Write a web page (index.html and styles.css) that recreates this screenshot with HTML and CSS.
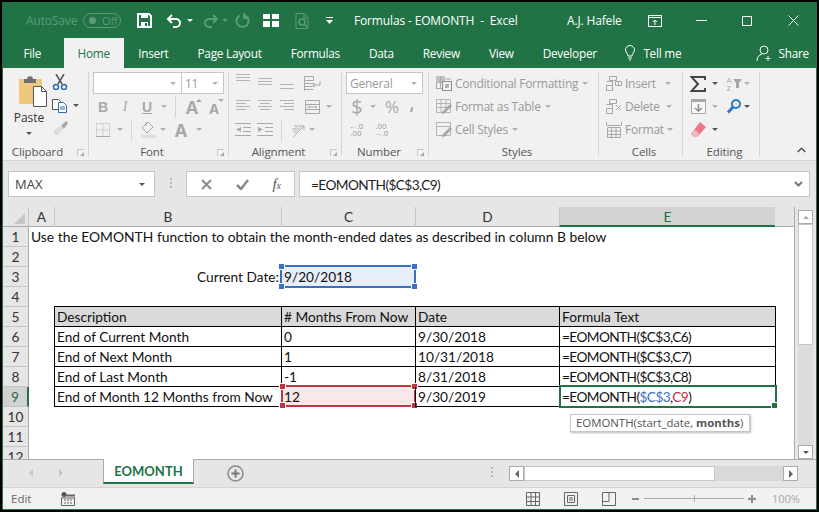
FILE: index.html
```html
<!DOCTYPE html>
<html lang="en">
  <head>
    <meta charset="UTF-8" />
    <title>Formulas - EOMONTH - Excel</title>
    <link rel="stylesheet" href="styles.css">
  </head>
  <body>
    <div class="window">
      <!-- title bar -->
      <div class="titlebar">
        <span class="autosave">AutoSave</span>
        <span class="toggle"><i></i>Off</span>
        <svg class="qa-save" width="15" height="15" viewBox="0 0 15 15"><path d="M1 1h11l2 2v11H1z" fill="none" stroke="#fff" stroke-width="2"/><rect x="4" y="1" width="7" height="4" fill="#fff"/><rect x="4" y="9" width="7" height="5" fill="#fff"/><rect x="8" y="10" width="2" height="3" fill="#217346"/></svg>
        <svg class="qa-undo" width="16" height="14" viewBox="0 0 16 14"><path d="M6 1L2 5l4 4M2 5h8a4 4 0 0 1 0 8H7" fill="none" stroke="#fff" stroke-width="2"/></svg>
        <span class="caret white qa-c1"></span>
        <svg class="qa-redo" width="16" height="14" viewBox="0 0 16 14"><path d="M10 1l4 4-4 4M14 5H6a4 4 0 0 0 0 8h3" fill="none" stroke="#5c9a78" stroke-width="2"/></svg>
        <span class="caret faint qa-c2"></span>
        <svg class="qa-repeat" width="15" height="15" viewBox="0 0 15 15"><path d="M5 2.5a6 6 0 1 0 5 0M9 0v5h5" fill="none" stroke="#5c9a78" stroke-width="2"/></svg>
        <svg class="qa-grid" width="16" height="13" viewBox="0 0 16 13"><path d="M0 0h7v5H0zM9 0h7v5H9zM0 7h7v6H0zM9 7h7v6H9z" fill="#fff"/></svg>
        <svg class="qa-preview" width="14" height="16" viewBox="0 0 14 16"><path d="M9 .5H1v15h12V5zM9 .5V5h4" fill="none" stroke="#5c9a78"/><circle cx="7" cy="9" r="3" fill="none" stroke="#5c9a78" stroke-width="1.5"/><path d="M9 11l3 3" stroke="#5c9a78" stroke-width="1.5"/></svg>
        <svg class="qa-custom" width="7" height="7" viewBox="0 0 7 7"><path d="M0 0h7v1H0zM0 3h7L3.5 7z" fill="#fff"/></svg>
        <span class="doc-title">Formulas - EOMONTH &nbsp;-&nbsp; Excel</span>
        <span class="user">A.J. Hafele</span>
        <svg class="win-display" width="14" height="12" viewBox="0 0 14 12"><path d="M.5 2.500h13v9H.5zM.5.5h13v2H.5zM7 10V5M5 7l2-2 2 2" fill="none" stroke="#fff"/></svg>
        <svg class="win-min" width="11" height="1" viewBox="0 0 11 1"><rect width="11" height="1" fill="#fff"/></svg>
        <svg class="win-max" width="10" height="10" viewBox="0 0 10 10"><rect x=".5" y=".5" width="9" height="9" fill="none" stroke="#fff"/></svg>
        <svg class="win-close" width="11" height="11" viewBox="0 0 11 11"><path d="M.5.5l10 10M10.500.5l-10 10" stroke="#fff"/></svg>
      </div>

      <!-- ribbon tabs -->
      <div class="tabs">
        <span class="tab file">File</span>
        <span class="tab active">Home</span>
        <span class="tab">Insert</span>
        <span class="tab">Page Layout</span>
        <span class="tab">Formulas</span>
        <span class="tab">Data</span>
        <span class="tab">Review</span>
        <span class="tab">View</span>
        <span class="tab">Developer</span>
        <span class="tell">
          <svg width="10" height="16" viewBox="0 0 10 16"><path d="M3 11C3 8 .5 8 .5 5a4.500 4.500 0 0 1 9 0c0 3-2.500 3-2.500 6zM3 13h4M4 15h2" fill="none" stroke="#fff"/></svg>
          Tell me
        </span>
        <span class="share">
          <svg width="16" height="17" viewBox="0 0 16 17"><circle cx="8" cy="5" r="4" fill="none" stroke="#fff"/><path d="M1 16c0-4 2-6 5-7M12 11v5M9.500 13.500h5" fill="none" stroke="#fff"/></svg>
          Share
        </span>
      </div>

      <!-- ribbon -->
      <div class="ribbon">
        <div class="group g-clip">
          <div class="body clip-body">
            <div class="paste">
              <svg width="30" height="36" viewBox="0 0 30 36"><path d="M1 5h22a1 1 0 0 1 1 1v24H2a1 1 0 0 1-1-1z" fill="#edc87e"/><path d="M6 5h3l1-2.500h4L15 5h3v4H6z" fill="#6f6f6f"/><path d="M15.500 12.500h8l5 5v15h-13z" fill="#fff" stroke="#555"/><path d="M23.500 12.500v5h5" fill="none" stroke="#555"/></svg>
              <span class="paste-label">Paste</span>
              <span class="caret dark"></span>
            </div>
            <div class="clip-tools">
              <svg width="16" height="16" viewBox="0 0 16 16"><path d="M4 0l6 10M12 0L6 10" stroke="#555" stroke-width="1.500"/><circle cx="4" cy="13" r="2.500" fill="none" stroke="#2b6cb0" stroke-width="1.500"/><circle cx="12" cy="13" r="2.500" fill="none" stroke="#2b6cb0" stroke-width="1.500"/></svg>
              <div class="irow copy-row">
                <svg width="15" height="14" viewBox="0 0 15 14"><path d="M.5.5h6l2 2v8H.5z" fill="#fff" stroke="#555"/><path d="M6.500 3.500h5l3 3v7h-8z" fill="#fff" stroke="#2b6cb0"/><path d="M8 8h5M8 10h5" stroke="#2b6cb0"/></svg>
                <span class="caret dark"></span>
              </div>
              <svg class="painter" width="17" height="16" viewBox="0 0 17 16"><path d="M1 12l6-6 4 3-5 6H3z" fill="#ddd"/><path d="M9 6l5-5 2 2-4 6z" fill="#a8a8a8"/></svg>
            </div>
          </div>
          <div class="label">Clipboard</div>
          <span class="launcher"></span>
        </div>

        <div class="group g-font">
          <div class="body">
            <div class="irow box-row">
              <span class="box font-name"><span class="caret"></span></span>
              <span class="box font-size"><em>11</em><span class="caret"></span></span>
            </div>
            <div class="irow">
              <span class="ti w22 fnt-b">B</span>
              <span class="ti w22 fnt-i">I</span>
              <span class="ti w22 fnt-u">U</span>
              <span class="ti w12"><span class="caret"></span></span>
              <span class="ti w11"><span class="vsep"></span></span>
              <span class="ti w22 fnt-a">A<span class="caret up"></span></span>
              <span class="ti w22 fnt-a small">A<span class="caret"></span></span>
            </div>
            <div class="irow">
              <span class="ti w22"><svg width="14" height="14" viewBox="0 0 14 14"><path d="M.5.5h13v13H.5zM7 .5v13M.5 7h13" fill="none" stroke="#b4b4b4" stroke-dasharray="1 1"/><path d="M0 13.500h14" stroke="#a8a8a8"/></svg></span>
              <span class="ti w12"><span class="caret"></span></span>
              <span class="ti w11"><span class="vsep"></span></span>
              <span class="ti w22"><svg width="15" height="17" viewBox="0 0 15 17"><path d="M7 1L1 7l5 5 6-6zM5 1v4" fill="none" stroke="#a8a8a8"/><rect y="14" width="15" height="3" fill="#e2dcdc"/></svg></span>
              <span class="ti w8"><span class="caret"></span></span>
              <span class="ti w28 fnt-a">A</span>
              <span class="ti w8"><span class="caret"></span></span>
            </div>
          </div>
          <div class="label">Font</div>
          <span class="launcher"></span>
        </div>

        <div class="group g-align">
          <div class="body">
            <div class="irow">
              <span class="ti w22 lines at-top"><i></i><i></i><i></i></span>
              <span class="ti w22 lines at-mid"><i></i><i></i><i></i></span>
              <span class="ti w22 lines at-bot"><i></i><i></i></span>
              <span class="ti w28"><svg width="17" height="16" viewBox="0 0 17 16"><path d="M.5.5h9v4h-9zM.5 7.500h9M.5 10.500h9M.5 13.500h9M.5 4.500v10" fill="none" stroke="#a8a8a8"/><path d="M9 9h7V5M9 9l2-2M9 9l2 2" fill="none" stroke="#a8a8a8"/></svg></span>
            </div>
            <div class="irow">
              <span class="ti w22 lines left"><i></i><i></i><i></i><i></i></span>
              <span class="ti w22 lines center"><i></i><i></i><i></i><i></i></span>
              <span class="ti w22 lines right"><i></i><i></i><i></i><i></i></span>
              <span class="ti w28"><svg width="15" height="14" viewBox="0 0 15 14"><path d="M.5.5h14v13H.5zM.5 4.500h14M.5 9.500h14M3 7h9M3 7l1.500-1M3 7l1.500 1M12 7l-1.500-1M12 7l-1.500 1" fill="none" stroke="#a8a8a8"/></svg></span>
              <span class="ti w6"><span class="caret"></span></span>
            </div>
            <div class="irow">
              <span class="ti w22"><svg width="16" height="13" viewBox="0 0 16 13"><path d="M0 .5h16M8 4.500h8M8 8.500h8M0 12.500h16" stroke="#a8a8a8"/><path d="M6 4v5L1 6.500z" fill="#a8a8a8"/></svg></span>
              <span class="ti w22"><svg width="16" height="13" viewBox="0 0 16 13"><path d="M0 .5h16M8 4.500h8M8 8.500h8M0 12.500h16" stroke="#a8a8a8"/><path d="M1 4v5l5-2.500z" fill="#a8a8a8"/></svg></span>
              <span class="ti w10"><span class="vsep"></span></span>
              <span class="ti w22"><span class="orient">ab</span><svg class="orient-arrow" width="16" height="16" viewBox="0 0 16 16"><path d="M4 15L15 4M15 4h-4M15 4v4" fill="none" stroke="#a8a8a8"/></svg></span>
              <span class="ti w8"><span class="caret"></span></span>
            </div>
          </div>
          <div class="label">Alignment</div>
          <span class="launcher"></span>
        </div>

        <div class="group g-num">
          <div class="body">
            <div class="irow box-row">
              <span class="box num-format"><em>General</em><span class="caret"></span></span>
            </div>
            <div class="irow">
              <span class="ti w22 num-sym big">$</span>
              <span class="ti w10"><span class="caret"></span></span>
              <span class="ti w28 num-sym">%</span>
              <span class="ti w12 num-sym comma">,</span>
            </div>
            <div class="irow">
              <span class="ti w20 dec">←.0
.00</span>
              <span class="ti w30 dec">.00
→.0</span>
            </div>
          </div>
          <div class="label">Number</div>
          <span class="launcher"></span>
        </div>

        <div class="group g-styles">
          <div class="body">
            <div class="irow cmd">
              <svg width="16" height="15" viewBox="0 0 16 15"><path d="M0 0h9v6H0z" fill="#c2c2c2"/><path d="M.5 6.500h8v6h-8zM4.500 0v12M9 3h6" fill="none" stroke="#a8a8a8"/><rect x="6.500" y="5.500" width="9" height="9" fill="#f1f1f1" stroke="#8e8e8e"/><path d="M9 9h4M9 11h4M12.500 8l-3 4" stroke="#8e8e8e"/></svg>
              <span>Conditional Formatting</span><span class="caret"></span>
            </div>
            <div class="irow cmd">
              <svg width="16" height="15" viewBox="0 0 16 15"><path d="M.5.500h14v13H.5zM.5 4.500h14M.5 8.500h14M5 .5v13M10 .5v13" fill="none" stroke="#b4b4b4"/><path d="M5 14l9-9 2 2-8 8z" fill="#a8a8a8"/></svg>
              <span>Format as Table</span><span class="caret"></span>
            </div>
            <div class="irow cmd">
              <svg width="16" height="15" viewBox="0 0 16 15"><path d="M.5.500h14v13H.5zM.5 4.500h14" fill="none" stroke="#b4b4b4"/><path d="M5 14l9-9 2 2-8 8z" fill="#a8a8a8"/></svg>
              <span>Cell Styles</span><span class="caret"></span>
            </div>
          </div>
          <div class="label">Styles</div>
        </div>

        <div class="group g-cells">
          <div class="body">
            <div class="irow cmd">
              <svg width="16" height="15" viewBox="0 0 16 15"><path d="M3.500.5h7v4h-7zM.5 9.500h6v5h-6zM.5 5.500h6M9.500 5.500h6v4h-6zM12.500 5.500v4M6.500 5v10" fill="none" stroke="#a8a8a8"/></svg>
              <span>Insert</span><span class="caret c-insert"></span>
            </div>
            <div class="irow cmd">
              <svg width="16" height="15" viewBox="0 0 16 15"><path d="M3.500.5h7v4h-7zM.5 9.500h6v5h-6zM.5 5.500h6v4M10 6l5 5M15 6l-5 5" fill="none" stroke="#a8a8a8"/></svg>
              <span>Delete</span><span class="caret c-delete"></span>
            </div>
            <div class="irow cmd">
              <svg width="16" height="16" viewBox="0 0 16 16"><path d="M.5 3.500h15M.5 0v3M15.500 0v3" stroke="#a8a8a8" fill="none"/><path d="M1.500 5.500h13v10h-13zM1.500 9h13M1.500 12.500h13M5.500 5.500v10M10 5.500v10" fill="none" stroke="#a8a8a8"/></svg>
              <span>Format</span><span class="caret c-format"></span>
            </div>
          </div>
          <div class="label">Cells</div>
        </div>

        <div class="group g-edit">
          <div class="body">
            <div class="irow">
              <span class="ti w16"><svg width="16" height="16" viewBox="0 0 16 16"><path d="M15 4V1H1.500L8 8l-6.500 7H15v-3" fill="none" stroke="#444" stroke-width="2"/></svg></span>
              <span class="ti w18"><span class="caret dark"></span></span>
              <span class="ti w20 sort">
                <span class="az">A
Z</span>
                <svg width="9" height="9" viewBox="0 0 9 9"><path d="M0 0h9L6 4v5H3V4z" fill="#a8a8a8"/></svg>
              </span>
              <span class="ti w6"><span class="caret"></span></span>
            </div>
            <div class="irow">
              <span class="ti w16"><svg width="15" height="15" viewBox="0 0 15 15"><path d="M.5.5h14v14H.5z" fill="#f7f7f7" stroke="#a8a8a8"/><path d="M0 0h15v3H0z" fill="#a8a8a8"/><path d="M7.500 5v7M4 9l3.500 3L11 9" fill="none" stroke="#8e8e8e" stroke-width="1.500"/></svg></span>
              <span class="ti w18"><span class="caret"></span></span>
              <span class="ti w20"><svg width="16" height="15" viewBox="0 0 16 15"><circle cx="10" cy="5" r="4" fill="none" stroke="#2b79c2" stroke-width="2"/><path d="M7 8l-5 5.500" stroke="#2b79c2" stroke-width="3"/></svg></span>
              <span class="ti w6"><span class="caret dark"></span></span>
            </div>
            <div class="irow">
              <span class="ti w16"><svg width="15" height="15" viewBox="0 0 15 15"><path d="M9 0l6 5-6 7-3 3H3l-3-3z" fill="#e9768c"/><path d="M0 12l3 3h3l2.500-3L4 7.500z" fill="#f5b5c0"/></svg></span>
              <span class="ti w18"><span class="caret dark"></span></span>
            </div>
          </div>
          <div class="label">Editing</div>
        </div>

        <svg class="collapse" width="9" height="6" viewBox="0 0 9 6"><path d="M.7 5l3.800-3.800L8.300 5" fill="none" stroke="#555" stroke-width="1.500"/></svg>
      </div>

      <!-- formula bar -->
      <div class="formulabar">
        <div class="namebox">MAX<span class="caret dark"></span></div>
        <span class="grip"><i></i><i></i><i></i></span>
        <div class="fxbox">
          <svg width="11" height="11" viewBox="0 0 11 11"><path d="M1 1l9 9M10 1l-9 9" stroke="#8a8a8a" stroke-width="2"/></svg>
          <svg width="13" height="11" viewBox="0 0 13 11"><path d="M1 6l4 4 7-9" fill="none" stroke="#8a8a8a" stroke-width="2.500"/></svg>
          <i class="fx">f<small>x</small></i>
        </div>
        <div class="formula"><span class="fm">=EOMONTH($C$3,C9)</span>
          <svg width="9" height="6" viewBox="0 0 9 6"><path d="M1 1l3.500 3.500L8 1" fill="none" stroke="#777" stroke-width="2"/></svg>
        </div>
      </div>

      <!-- sheet -->
      <div class="sheet-area">
        <div class="sheet">
          <div class="row heads">
            <div class="corner"><span></span></div>
            <div class="colh first">A</div>
            <div class="colh">B</div>
            <div class="colh">C</div>
            <div class="colh">D</div>
            <div class="colh on">E</div>
          </div>
          <div class="row"><div class="rowh">1</div><div class="cell lead">Use the EOMONTH function to obtain the month-ended dates as described in column B below</div></div>
          <div class="row"><div class="rowh">2</div></div>
          <div class="row">
            <div class="rowh">3</div><div></div>
            <div class="cell right">Current Date:</div>
            <div class="cell c-val fill-blue">9/20/2018<span class="sel blue"><i class="tl"></i><i class="tr"></i><i class="bl"></i><i class="br"></i></span></div>
          </div>
          <div class="row"><div class="rowh">4</div><div></div><div class="tcap"></div><div class="tcap"></div><div class="tcap"></div><div class="tcap"></div></div>
          <div class="row">
            <div class="rowh">5</div><div></div>
            <div class="cell tc hd">Description</div>
            <div class="cell tc hd"># Months From Now</div>
            <div class="cell tc hd">Date</div>
            <div class="cell tc hd last">Formula Text</div>
          </div>
          <div class="row">
            <div class="rowh">6</div><div></div>
            <div class="cell tc">End of Current Month</div>
            <div class="cell tc">0</div>
            <div class="cell tc">9/30/2018</div>
            <div class="cell tc last fm">=EOMONTH($C$3,C6)</div>
          </div>
          <div class="row">
            <div class="rowh">7</div><div></div>
            <div class="cell tc">End of Next Month</div>
            <div class="cell tc">1</div>
            <div class="cell tc">10/31/2018</div>
            <div class="cell tc last fm">=EOMONTH($C$3,C7)</div>
          </div>
          <div class="row">
            <div class="rowh">8</div><div></div>
            <div class="cell tc">End of Last Month</div>
            <div class="cell tc">-1</div>
            <div class="cell tc">8/31/2018</div>
            <div class="cell tc last fm">=EOMONTH($C$3,C8)</div>
          </div>
          <div class="row">
            <div class="rowh on">9</div><div></div>
            <div class="cell tc">End of Month 12 Months from Now</div>
            <div class="cell tc fill-red">12<span class="sel red"><i class="tl"></i><i class="tr"></i><i class="bl"></i><i class="br"></i></span></div>
            <div class="cell tc">9/30/2019</div>
            <div class="cell tc last fm">=EOMONTH(<span class="ref-blue">$C$3</span>,<span class="ref-red">C9</span>)
              <span class="active-cell"><i></i></span>
              <span class="tip">EOMONTH(start_date, <b>months</b>)</span>
            </div>
          </div>
          <div class="row"><div class="rowh">10</div></div>
          <div class="row"><div class="rowh">11</div></div>
          <div class="row"><div class="rowh">12</div></div>
        </div>
        <div class="vscroll">
          <span class="sbtn"><span class="caret up"></span></span>
          <span class="vthumb"></span>
          <span class="vtrack"></span>
          <span class="sbtn"><span class="caret dark"></span></span>
        </div>
      </div>

      <!-- sheet tabs -->
      <div class="sheetbar">
        <span class="nav left"></span>
        <span class="nav right"></span>
        <span class="sheettab">EOMONTH</span>
        <svg class="addsheet" width="17" height="17" viewBox="0 0 17 17"><circle cx="8.500" cy="8.500" r="7.500" fill="none" stroke="#8a8a8a" stroke-width="1.500"/><path d="M8.500 4.500v8M4.500 8.500h8" stroke="#777" stroke-width="2"/></svg>
        <span class="grip sb-grip"><i></i><i></i><i></i></span>
        <div class="hscroll">
          <span class="hbtn"><span class="tri-l"></span></span>
          <span class="hthumb"></span>
          <span class="htrack"></span>
          <span class="hbtn"><span class="tri-r"></span></span>
        </div>
      </div>

      <!-- status bar -->
      <div class="statusbar">
        <span class="mode">Edit</span>
        <svg class="macro" width="14" height="14" viewBox="0 0 14 14"><circle cx="3" cy="2.500" r="2.500" fill="#555"/><path d="M5 2.500h9v2H5zM1 5.500h13v1H1z" fill="#666"/><path d="M.5 5.500v8h13v-8" fill="none" stroke="#666"/><path d="M3 8h2M6 8h2M9 8h2M3 11h2M6 11h2M9 11h2" stroke="#666"/></svg>
        <svg class="view v1" width="14" height="14" viewBox="0 0 14 14"><path d="M.5.500h13v13H.5zM.5 5h13M.5 9.500h13M5 .5v13M9.500 .5v13" fill="none" stroke="#666"/></svg>
        <svg class="view v2" width="14" height="14" viewBox="0 0 14 14"><path d="M.5.500h13v13H.5z" fill="none" stroke="#666"/><path d="M3.500 3.500h7v7h-7zM5 6h4M5 8h4" fill="none" stroke="#666"/></svg>
        <svg class="view v3" width="14" height="14" viewBox="0 0 14 14"><path d="M.5.500h13v13H.5zM.5 9.500h6.500V.5" fill="none" stroke="#666"/></svg>
        <span class="zoom-minus"></span>
        <span class="slider"><i></i></span>
        <span class="zoom-plus"></span>
        <span class="zoom-val">100%</span>
      </div>
    </div>
  </body>
</html>
```

FILE: styles.css
```css
* {
  box-sizing: border-box;
}
html,
body {
  margin: 0;
  height: 512px;
  width: 819px;
  overflow: hidden;
  background: #000;
}
body {
  padding: 2px;
  font-family: "Open Sans", sans-serif;
  color: #222;
}
i,
em {
  font-style: normal;
}
svg {
  display: block;
  flex: none;
}
.window {
  width: 815px;
  height: 508px;
  border: 1px solid #217346;
  display: flex;
  flex-direction: column;
  background: #e6e6e6;
}

/* carets */
.caret {
  display: inline-block;
  flex: none;
  width: 0;
  height: 0;
  border-left: 3px solid transparent;
  border-right: 3px solid transparent;
  border-top: 3px solid #b0b0b0;
}
.caret.dark {
  border-top-color: #555;
}
.caret.white {
  border-top-color: #fff;
}
.caret.faint {
  border-top-color: #5c9a78;
}
.caret.up {
  border-top: 0;
  border-bottom: 3px solid #a8a8a8;
}

/* title bar */
.titlebar {
  height: 35px;
  background: #217346;
  display: flex;
  align-items: center;
  color: #fff;
  font-size: 12px;
  letter-spacing: -0.15px;
  white-space: nowrap;
}
.autosave {
  margin-left: 23px;
  width: 57px;
  color: #5c9a78;
}
.toggle {
  width: 38px;
  height: 15px;
  border: 1px solid #5c9a78;
  border-radius: 8px;
  color: #5c9a78;
  font-size: 11px;
  line-height: 13px;
  padding-left: 18px;
  position: relative;
}
.toggle i {
  position: absolute;
  left: 5px;
  top: 3px;
  width: 7px;
  height: 7px;
  border-radius: 50%;
  background: #5c9a78;
}
.qa-save {
  margin-left: 16px;
}
.qa-undo {
  margin-left: 14px;
}
.qa-c1 {
  margin-left: 5px;
}
.qa-redo {
  margin-left: 10px;
}
.qa-c2 {
  margin-left: 3px;
}
.qa-repeat {
  margin-left: 7px;
}
.qa-grid {
  margin-left: 13px;
}
.qa-preview {
  margin-left: 16px;
}
.qa-custom {
  margin-left: 17px;
}
.doc-title {
  margin-left: 21px;
  width: 213px;
  flex: none;
}
.user {
  width: 81px;
  flex: none;
}
.win-min {
  margin-left: 34px;
}
.win-max {
  margin-left: 35px;
}
.win-close {
  margin-left: 36px;
}

/* tabs */
.tabs {
  height: 30px;
  background: #217346;
  display: flex;
  align-items: stretch;
  color: #fff;
  font-size: 11.8px;
  letter-spacing: -0.25px;
  line-height: 31px;
  padding-left: 6px;
  white-space: nowrap;
}
.tab {
  padding: 0 14.5px;
}
.tab.file {
  margin-right: 8px;
}
.tab.active {
  background: #f1f1f1;
  color: #217346;
  padding: 0;
  width: 60px;
  text-align: center;
}
.tell {
  display: flex;
  align-items: center;
  gap: 8px;
  margin-left: 14px;
}
.share {
  display: flex;
  align-items: center;
  gap: 7px;
  margin-left: auto;
  margin-right: 7px;
}

/* ribbon */
.ribbon {
  height: 93px;
  background: #f1f1f1;
  border-bottom: 1px solid #d4d4d4;
  display: flex;
  position: relative;
  padding-top: 4px;
}
.group {
  height: 84px;
  border-right: 1px solid #d4d4d4;
  position: relative;
  display: flex;
  flex-direction: column;
}
.body {
  height: 72px;
  flex: none;
  display: flex;
  flex-direction: column;
}
.label {
  height: 16px;
  flex: none;
  line-height: 16px;
  text-align: center;
  font-size: 11.5px;
  letter-spacing: -0.1px;
  color: #555;
  padding-right: 16px;
}
.g-styles .label,
.g-cells .label,
.g-edit .label {
  padding-right: 0;
}
.launcher {
  position: absolute;
  right: 4px;
  bottom: 0;
  width: 7px;
  height: 7px;
  border-left: 1px solid #c6c6c6;
  border-top: 1px solid #c6c6c6;
}
.launcher::after {
  content: "";
  position: absolute;
  right: 0;
  bottom: 0;
  width: 0;
  height: 0;
  border-left: 4px solid transparent;
  border-bottom: 4px solid #a8a8a8;
}
.g-clip {
  width: 86px;
}
.g-font {
  width: 140px;
  padding-left: 3px;
}
.g-align {
  width: 113px;
  padding-left: 3px;
}
.g-num {
  width: 87px;
  padding-left: 4px;
}
.g-styles {
  width: 170px;
  padding-left: 7px;
}
.g-cells {
  width: 84px;
  padding-left: 7px;
}
.g-edit {
  width: 77px;
  padding-left: 7px;
}
.collapse {
  position: absolute;
  left: 794px;
  top: 79px;
}
.irow {
  height: 23px;
  display: flex;
  align-items: center;
  flex: none;
}
.box-row {
  height: 22px;
  margin-bottom: 1px;
  align-items: flex-start;
}
.ti {
  display: flex;
  align-items: center;
  justify-content: center;
  flex: none;
  height: 23px;
  color: #a8a8a8;
  position: relative;
}
.w6 {
  width: 6px;
}
.w8 {
  width: 8px;
}
.w10 {
  width: 10px;
}
.w11 {
  width: 11px;
}
.w12 {
  width: 12px;
}
.w16 {
  width: 16px;
}
.w18 {
  width: 18px;
}
.w20 {
  width: 20px;
}
.w22 {
  width: 22px;
}
.w28 {
  width: 28px;
}
.w30 {
  width: 30px;
}
.vsep {
  width: 1px;
  height: 22px;
  background: #d4d4d4;
}
.box {
  background: #fff;
  border: 1px solid #c6c6c6;
  height: 22px;
  display: flex;
  align-items: center;
  justify-content: flex-end;
  padding: 0 5px 0 3px;
  font-size: 12px;
  letter-spacing: -0.25px;
  color: #9a9a9a;
}
.box em {
  margin-right: auto;
}
.font-name {
  width: 88px;
  margin-left: 1px;
  border-right: 0;
}
.font-size {
  width: 43px;
}
.num-format {
  width: 77px;
}

/* clipboard */
.clip-body {
  flex-direction: row;
}
.paste {
  width: 42px;
  margin-left: 5px;
  display: flex;
  flex-direction: column;
  align-items: center;
  padding-top: 2px;
}
.paste svg {
  margin-left: 7px;
}
.paste-label {
  font-size: 12px;
  line-height: 17px;
  margin-top: -1px;
  color: #333;
}
.paste .caret {
  margin-top: 6px;
}
.clip-tools {
  padding-left: 2px;
  padding-top: 2px;
}
.copy-row {
  gap: 6px;
  margin-top: 4px;
}
.painter {
  margin-top: 3px;
}

/* font */
.fnt-b,
.fnt-u {
  font: bold 14px "Liberation Sans", sans-serif;
}
.fnt-i {
  font: italic 14px "Liberation Serif", serif;
}
.fnt-u {
  text-decoration: underline;
}
.fnt-a {
  font: bold 18px "Open Sans", sans-serif;
}
.fnt-a.small {
  font-size: 14px;
  padding-top: 3px;
}
.fnt-a .caret {
  position: absolute;
  right: 1px;
  top: 4px;
}

/* alignment */
.lines {
  flex-direction: column;
  gap: 2px;
  justify-content: flex-start;
}
.lines i {
  display: block;
  width: 14px;
  height: 1px;
  background: #b4b4b4;
  flex: none;
}
.lines.at-top {
  padding-top: 2px;
}
.lines.at-mid {
  padding-top: 6px;
}
.lines.at-bot {
  padding-top: 12px;
  gap: 3px;
}
.lines.left,
.lines.center,
.lines.right {
  padding-top: 5px;
}
.lines.center i:nth-child(even) {
  width: 10px;
}
.lines.left i:nth-child(even) {
  width: 10px;
  margin-right: 4px;
}
.lines.right i:nth-child(even) {
  width: 10px;
  margin-left: 4px;
}
.orient {
  font-size: 8px;
  line-height: 10px;
  color: #a8a8a8;
  transform: rotate(-42deg);
  position: absolute;
  left: 5px;
  top: 5px;
}

/* number */
.num-sym {
  font-size: 17px;
  color: #a8a8a8;
}
.num-sym.big {
  font-size: 20px;
}
.comma {
  font-weight: bold;
  padding-bottom: 6px;
}
.dec {
  display: block;
  font-size: 8px;
  line-height: 7px;
  padding-top: 4px;
  color: #999;
  white-space: pre;
  text-align: center;
}

/* styles, cells */
.cmd {
  font-size: 12px;
  letter-spacing: -0.25px;
  color: #999;
  gap: 3px;
  white-space: nowrap;
}
.cmd .caret {
  margin-left: 1px;
}
.cmd .c-insert {
  margin-left: 6px;
}
.cmd .c-delete {
  margin-left: 3px;
}
.cmd .c-format {
  margin-left: 0;
}

/* editing */
.sort {
  gap: 1px;
}
.az {
  font-size: 8px;
  line-height: 8px;
  color: #a8a8a8;
  white-space: pre;
}

/* formula bar */
.formulabar {
  height: 46px;
  display: flex;
  align-items: flex-start;
  padding: 10px 0 0 5px;
  background: #e6e6e6;
}
.namebox,
.fxbox,
.formula {
  height: 26px;
  background: #fff;
  border: 1px solid #c6c6c6;
  display: flex;
  align-items: center;
}
.namebox {
  width: 147px;
  padding: 0 9px 0 6px;
  justify-content: space-between;
  font-size: 13px;
  color: #444;
}
.grip {
  width: 31px;
  display: flex;
  flex-direction: column;
  align-items: center;
  gap: 2px;
  padding-top: 7px;
}
.grip i {
  width: 2px;
  height: 2px;
  background: #b4b4b4;
}
.fxbox {
  width: 109px;
  justify-content: space-between;
  padding: 0 13px 0 14px;
}
.fx {
  font: italic 15px "Liberation Serif", serif;
  color: #555;
}
.fx small {
  font-size: 10px;
}
.formula {
  width: 511px;
  margin-left: 4px;
  padding: 0 6px 0 11px;
  justify-content: space-between;
  font-family: Lato, sans-serif;
  font-size: 13.7px;
  color: #222;
}
.fm {
  letter-spacing: -0.6px;
}

/* sheet */
.sheet-area {
  height: 252px;
  display: flex;
  background: #e6e6e6;
}
.sheet {
  width: 792px;
  height: 252px;
  overflow: hidden;
  background: #fff;
  border-right: 1px solid #ababab;
  font-family: Lato, sans-serif;
  font-size: 13.7px;
  color: #111;
}
.row {
  height: 20px;
  display: grid;
  grid-template-columns: 26px 25px 227px 134px 144px 217px 1fr;
}
.heads {
  background: #e6e6e6;
  border-bottom: 1px solid #ababab;
}
.corner {
  border-right: 1px solid #c6c6c6;
  position: relative;
}
.corner span {
  position: absolute;
  right: 3px;
  bottom: 3px;
  width: 0;
  height: 0;
  border-left: 11px solid transparent;
  border-bottom: 11px solid #c6c6c6;
}
.colh {
  text-align: center;
  line-height: 19px;
  border-left: 1px solid #c6c6c6;
  color: #333;
}
.colh.first {
  border-left: 0;
}
.colh.on {
  background: #d2d2d2;
  color: #217346;
  border-bottom: 2px solid #217346;
  margin-right: 1px;
  height: 20px;
}
.rowh {
  background: #e6e6e6;
  border-right: 1px solid #ababab;
  border-bottom: 1px solid #c6c6c6;
  text-align: center;
  line-height: 19px;
  color: #333;
}
.rowh.on {
  background: #d2d2d2;
  border-right: 2px solid #217346;
  color: #217346;
}
.cell {
  line-height: 19px;
  padding-left: 2px;
  white-space: nowrap;
  position: relative;
}
.cell.lead {
  font-size: 13.85px;
}
.cell.right {
  text-align: right;
  padding-right: 2px;
}
.c-val {
  padding-left: 3px;
}
.tcap {
  border-bottom: 1px solid #000;
}
.tc {
  border-left: 1px solid #000;
  border-bottom: 1px solid #000;
}
.tc.last {
  border-right: 1px solid #000;
}
.hd {
  background: #d9d9d9;
}
.fill-blue {
  background: #e8eef8;
}
.fill-red {
  background: #f8e8e9;
}
.ref-blue {
  color: #3a6fc4;
}
.ref-red {
  color: #c0353f;
}
.sel {
  position: absolute;
  top: -2px;
  bottom: -1px;
  left: -1px;
  right: -1px;
  border: 2px solid;
}
.sel.blue {
  border-color: #3a6fc4;
  color: #3a6fc4;
}
.sel.red {
  border-color: #c0353f;
  color: #c0353f;
}
.sel i {
  position: absolute;
  width: 5px;
  height: 5px;
  background: currentColor;
  outline: 1px solid #fff;
}
.sel .tl {
  left: -3px;
  top: -3px;
}
.sel .tr {
  right: -3px;
  top: -3px;
}
.sel .bl {
  left: -3px;
  bottom: -3px;
}
.sel .br {
  right: -3px;
  bottom: -3px;
}
.active-cell {
  position: absolute;
  left: -1px;
  right: -2px;
  top: -2px;
  bottom: -2px;
  border: 2px solid #217346;
}
.active-cell i {
  position: absolute;
  right: -2px;
  bottom: -2px;
  width: 5px;
  height: 5px;
  background: #217346;
  outline: 1px solid #fff;
}
.tip {
  position: absolute;
  left: 10px;
  top: 27px;
  width: 180px;
  height: 18px;
  background: #fff;
  border: 1px solid #c6c6c6;
  box-shadow: 1px 1px 2px #bbb;
  font: 11.4px/16px "Open Sans", sans-serif;
  letter-spacing: 0;
  color: #555;
  padding-left: 5px;
  z-index: 2;
}

/* scrollbars */
.vscroll {
  width: 21px;
  height: 252px;
  padding: 3px 3px 0 3px;
  display: flex;
  flex-direction: column;
}
.sbtn {
  height: 14px;
  flex: none;
  background: #fff;
  border: 1px solid #ababab;
  display: flex;
  align-items: center;
  justify-content: center;
}
.vthumb {
  height: 121px;
  background: #fff;
  border: 1px solid #c6c6c6;
  flex: none;
}
.vtrack {
  flex: 1;
  background: #dcdcdc;
}
.sheetbar {
  height: 28px;
  background: #e6e6e6;
  border-top: 1px solid #ababab;
  display: flex;
  align-items: flex-start;
  position: relative;
}
.nav {
  position: absolute;
  top: 9px;
  width: 0;
  height: 0;
  border-top: 4px solid transparent;
  border-bottom: 4px solid transparent;
}
.nav.left {
  left: 26px;
  border-right: 4px solid #c6c6c6;
}
.nav.right {
  left: 56px;
  border-left: 4px solid #c6c6c6;
}
.sheettab {
  margin-left: 100px;
  width: 91px;
  height: 25px;
  background: #fff;
  border-left: 1px solid #ababab;
  border-right: 1px solid #ababab;
  border-bottom: 2px solid #217346;
  margin-top: -1px;
  text-align: center;
  font: bold 13px/25px Lato, sans-serif;
  color: #217346;
}
.addsheet {
  margin-left: 33px;
  margin-top: 5px;
}
.sb-grip {
  width: 10px;
  margin-left: 243px;
  padding-top: 7px;
}
.hscroll {
  margin-left: 12px;
  margin-top: 6px;
  width: 289px;
  height: 15px;
  display: flex;
}
.hbtn {
  width: 15px;
  height: 15px;
  background: #fff;
  border: 1px solid #ababab;
  display: flex;
  align-items: center;
  justify-content: center;
  flex: none;
}
.tri-l,
.tri-r {
  width: 0;
  height: 0;
  border-top: 4px solid transparent;
  border-bottom: 4px solid transparent;
}
.tri-l {
  border-right: 4px solid #666;
}
.tri-r {
  border-left: 4px solid #666;
}
.hthumb {
  width: 191px;
  background: #fff;
  border: 1px solid #c6c6c6;
}
.htrack {
  width: 68px;
  background: #d9d9d9;
}

/* status bar */
.statusbar {
  height: 22px;
  background: #f1f1f1;
  border-top: 1px solid #d4d4d4;
  display: flex;
  align-items: center;
  font-size: 11.5px;
  color: #666;
  position: relative;
}
.mode {
  margin-left: 8px;
  width: 50px;
}
.view.v1 {
  margin-left: 451px;
}
.view.v2,
.view.v3 {
  margin-left: 24px;
}
.zoom-minus {
  margin-left: 16px;
  width: 7px;
  height: 2px;
  background: #8a8a8a;
}
.slider {
  margin-left: 5px;
  width: 100px;
  height: 1px;
  background: #a8a8a8;
  position: relative;
}
.slider i {
  position: absolute;
  left: 50px;
  top: -3px;
  width: 1px;
  height: 7px;
  background: #a8a8a8;
}
.zoom-plus {
  margin-left: 4px;
  width: 8px;
  height: 8px;
  background: linear-gradient(#8a8a8a, #8a8a8a) center/8px 2px no-repeat,
    linear-gradient(#8a8a8a, #8a8a8a) center/2px 8px no-repeat;
}
.zoom-val {
  margin-left: 16px;
  font-size: 11px;
  color: #a8a8a8;
}
```
